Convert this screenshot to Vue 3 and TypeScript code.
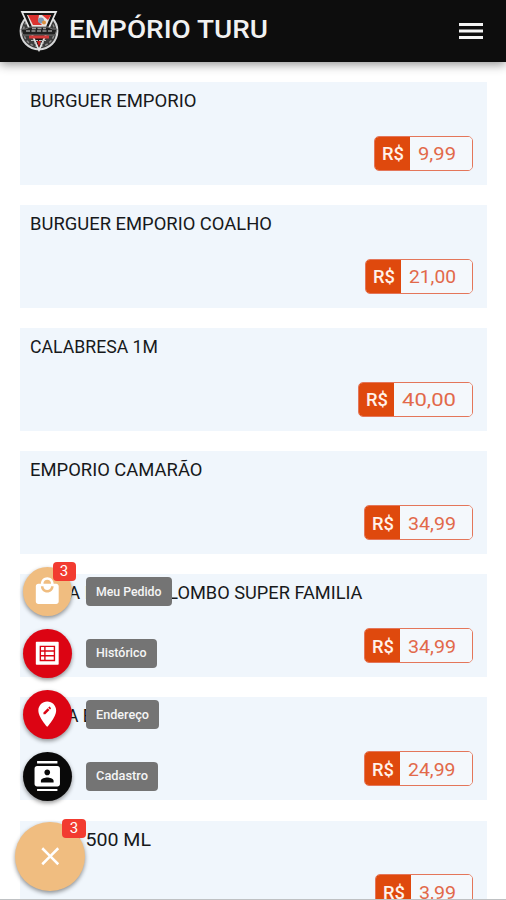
<script setup lang="ts">
interface Product { name: string; nameWidth: number; price: string; priceWidth: number }
interface Action { label: string; labelWidth: number; tone: string; icon: string; badge?: number }

const products: Product[] = [
  { name: 'BURGUER EMPORIO', nameWidth: 166.5, price: '9,99', priceWidth: 38 },
  { name: 'BURGUER EMPORIO COALHO', nameWidth: 242, price: '21,00', priceWidth: 47 },
  { name: 'CALABRESA 1M', nameWidth: 128, price: '40,00', priceWidth: 54 },
  { name: 'EMPORIO CAMARÃO', nameWidth: 172.5, price: '34,99', priceWidth: 48 },
  { name: 'PIZZA EMPORIO LOMBO SUPER FAMILIA', nameWidth: 332.5, price: '34,99', priceWidth: 48 },
  { name: 'PIZZA EMPORIO', nameWidth: 129, price: '24,99', priceWidth: 47.5 },
  { name: 'SUCO 500 ML', nameWidth: 121, price: '3,99', priceWidth: 37 },
]

const actions: Action[] = [
  {
    label: 'Meu Pedido', labelWidth: 65.5, tone: 'sand', badge: 3,
    icon: 'M19 6h-2c0-2.76-2.24-5-5-5S7 3.24 7 6H5c-1.1 0-1.99.9-1.99 2L3 20c0 1.1.9 2 2 2h14c1.1 0 2-.9 2-2V8c0-1.1-.9-2-2-2zm-7-3c1.66 0 3 1.34 3 3H9c0-1.66 1.34-3 3-3zm0 10c-2.76 0-5-2.24-5-5h2c0 1.66 1.34 3 3 3s3-1.34 3-3h2c0 2.76-2.24 5-5 5z',
  },
  {
    label: 'Histórico', labelWidth: 50.5, tone: 'red',
    icon: 'M3.6 3h16.800q.6 0 .6.6v16.800q0 .6-.6.6H3.600q-.6 0-.6-.6V3.600q0-.6.6-.6zM6 6v12.200h12.200V6zM7.100 7.100h2.500v2.500H7.100zM10.700 7.100h6.400v2.500h-6.400zM7.100 10.850h2.500v2.500H7.100zM10.700 10.850h6.400v2.500h-6.400zM7.100 14.600h2.500v2.500H7.100zM10.700 14.600h6.400v2.500h-6.400z',
  },
  {
    label: 'Endereço', labelWidth: 53, tone: 'red',
    icon: 'M12 2C8.14 2 5 5.14 5 9c0 5.25 7 13 7 13s7-7.75 7-13c0-3.86-3.14-7-7-7zm-1.56 10H9v-1.44l3.35-3.34 1.43 1.43L10.44 12zm4.45-4.45l-.7.7-1.44-1.44.7-.7c.15-.15.39-.15.54 0l.9.9c.15.15.15.39 0 .54z',
  },
  {
    label: 'Cadastro', labelWidth: 52, tone: 'black',
    icon: 'M20 0H4v2h16V0zM4 24h16v-2H4v2zM20 4H4c-1.1 0-2 .9-2 2v12c0 1.1.9 2 2 2h16c1.1 0 2-.9 2-2V6c0-1.1-.9-2-2-2zm-8 2.75c1.24 0 2.25 1.01 2.25 2.25s-1.01 2.25-2.25 2.25S9.75 10.24 9.75 9 10.76 6.75 12 6.75zM17 17H7v-1.5c0-1.67 3.33-2.5 5-2.5s5 .83 5 2.5V17z',
  },
]
</script>

<template>
  <div class="app">
    <header class="bar">
      <svg class="logo" viewBox="0 0 40 42">
        <circle cx="20" cy="21" r="18.4" fill="#3b3b3b" stroke="#d5d6d7" stroke-width="2" />
        <circle cx="20" cy="21" r="15.5" fill="none" stroke="#8d8d8d" stroke-width="1.4" stroke-dasharray="3 2" />
        <path d="M3 2h34L20 40z" fill="#141414" stroke="#e4e5e5" stroke-width="1.8" />
        <path d="M8 5h24l-5 12H13z" fill="#e9e4e2" />
        <path d="M9 5h11l-1 6 4 4h-9z" fill="#dc3330" />
        <path d="M23 5h9l-3 5z" fill="#e2322d" />
        <circle cx="22" cy="10.500" r="3" fill="#8199b4" />
        <circle cx="25" cy="12.500" r="2" fill="#dc913f" />
        <path d="M2 19q5 1 9-2h18q4 3 9 2l-2 6H4z" fill="#202020" stroke="#777" stroke-width="1" />
        <path d="M7 21h26M13 18.500h14" stroke="#999" stroke-width="1.300" stroke-dasharray="4 1.500" />
        <path d="M10 25.500h20v3H10z" fill="#d23a39" />
        <path d="M12 30.500h16M15 33h10" stroke="#b9b9b9" stroke-width="1.200" stroke-dasharray="3 1" />
        <path d="M18 31h4l-2 6z" fill="#c8201f" />
      </svg>
      <h1 class="brand">
        <svg class="text" width="198" height="28"><text x="-1" y="24" textLength="199" lengthAdjust="spacingAndGlyphs">EMPÓRIO TURU</text></svg>
      </h1>
      <button class="menu" aria-label="Menu">
        <svg viewBox="0 0 24 24"><path d="M3 18h18v-2.200H3V18zm0-4.900h18v-2.200H3v2.200zM3 6v2.200h18V6H3z" /></svg>
      </button>
    </header>

    <main class="list">
      <article v-for="(p, i) in products" :key="i" class="card">
        <h2 class="name">
          <svg class="text" :width="p.nameWidth" height="20"><text x="0" y="15" :textLength="p.nameWidth" lengthAdjust="spacingAndGlyphs">{{ p.name }}</text></svg>
        </h2>
        <div class="price">
          <span class="currency">
            <svg class="text" width="22" height="20"><text x="0" y="16.500" textLength="22" lengthAdjust="spacingAndGlyphs">R$</text></svg>
          </span>
          <span class="amount">
            <svg class="text" :width="p.priceWidth" height="20"><text x="0" y="16.500" :textLength="p.priceWidth" lengthAdjust="spacingAndGlyphs">{{ p.price }}</text></svg>
          </span>
        </div>
      </article>
    </main>

    <nav class="dial">
      <div v-for="a in actions" :key="a.label" class="action">
        <button class="fab" :class="a.tone" :aria-label="a.label">
          <svg viewBox="0 0 24 24"><path fill-rule="evenodd" :d="a.icon" /></svg>
          <span v-if="a.badge" class="badge">{{ a.badge }}</span>
        </button>
        <span class="tip">
          <svg class="text" :width="a.labelWidth" height="16"><text x="0" y="12" :textLength="a.labelWidth" lengthAdjust="spacingAndGlyphs">{{ a.label }}</text></svg>
        </span>
      </div>
      <button class="fab main sand" aria-label="Fechar">
        <svg viewBox="0 0 24 24"><path d="M19 6.410L17.590 5 12 10.590 6.410 5 5 6.410 10.590 12 5 17.590 6.410 19 12 13.410 17.590 19 19 17.590 13.410 12z" /></svg>
        <span class="badge">3</span>
      </button>
    </nav>
  </div>
</template>

<style>
body { margin: 0; background: #fff; overflow: hidden; }
</style>

<style scoped>
.app {
  position: relative;
  box-sizing: border-box;
  height: 900px;
  overflow: hidden;
  border-bottom: 1px solid #bfc1c3;
  background: #fff;
  font-family: Roboto, "Liberation Sans", sans-serif;
}
h1, h2 { margin: 0; font-weight: 400; }
button { border: 0; padding: 0; background: none; font-family: inherit; }
svg { display: block; }
.text { overflow: visible; fill: currentColor; }

.bar {
  position: relative;
  display: flex;
  align-items: center;
  box-sizing: border-box;
  height: 62px;
  padding: 0 19px;
  background: #0d0d0d;
  color: #f1f1f1;
  box-shadow: 0 2px 10px rgba(0, 0, 0, .46);
}
.logo { width: 40px; height: 42px; }
.brand { margin: 0 auto 6px 11px; font-size: 26.500px; font-weight: 500; }
.menu svg { width: 32px; height: 32px; fill: #f4f4f4; }
.menu { margin-right: 0; }

.list { display: flex; flex-direction: column; gap: 20.300px; padding: 20px 19px 0 20px; }
.card {
  display: flex;
  flex-direction: column;
  justify-content: space-between;
  flex: none;
  box-sizing: border-box;
  height: 102.800px;
  padding: 10px 14.500px 14px 10px;
  background: #f0f6fc;
}
.name { color: #17191b; font-size: 17.500px; }
.price {
  display: flex;
  align-self: flex-end;
  box-sizing: border-box;
  height: 35px;
  overflow: hidden;
  border: 1px solid #e4765a;
  border-radius: 5px;
  font-size: 17.500px;
}
.currency, .amount { display: flex; align-items: center; }
.currency { padding: 0 6px 0 7px; background: #df490d; color: #fff2ea; font-weight: 500; }
.amount { padding: 0 16px 0 8px; color: #e2694a; font-weight: 400; background: #f4f8fc; }

.dial { position: absolute; left: 22.500px; top: 567px; display: flex; flex-direction: column; gap: 12.500px; }
.action { display: flex; align-items: center; gap: 14.500px; }
.fab {
  position: relative;
  display: flex;
  align-items: center;
  justify-content: center;
  width: 49px;
  height: 49px;
  border-radius: 50%;
  box-shadow: 0 2px 4px rgba(0, 0, 0, .42);
}
.fab svg { width: 30.500px; height: 30.500px; fill: #fff; }
.main { width: 69.500px; height: 69.500px; margin: 8.500px 0 0 -7.500px; }
.sand { background: #f0bd80; }
.red { background: #dc0413; }
.black { background: #090909; }
.badge {
  position: absolute;
  top: -5px;
  right: -4px;
  width: 23px;
  height: 19px;
  border-radius: 4px;
  background: #f23b30;
  color: #fff;
  font-size: 15px;
  line-height: 19px;
  text-align: center;
}
.main .badge { top: -3px; right: -1.500px; width: 24px; }
.tip {
  display: flex;
  align-items: center;
  box-sizing: border-box;
  height: 29px;
  padding: 0 10px;
  border-radius: 4px;
  background: #747474;
  color: #f5f5f5;
  font-size: 12px;
  font-weight: 500;
}
</style>
